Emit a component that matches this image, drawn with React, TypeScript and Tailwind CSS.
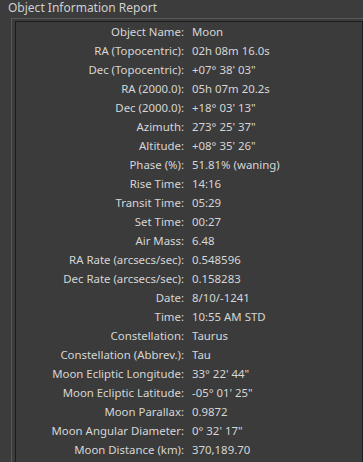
const rows: Array<[string, string]> = [
  ["Object Name:", "Moon"],
  ["RA (Topocentric):", "02h 08m 16.0s"],
  ["Dec (Topocentric):", "+07° 38' 03\""],
  ["RA (2000.0):", "05h 07m 20.2s"],
  ["Dec (2000.0):", "+18° 03' 13\""],
  ["Azimuth:", "273° 25' 37\""],
  ["Altitude:", "+08° 35' 26\""],
  ["Phase (%):", "51.81% (waning)"],
  ["Rise Time:", "14:16"],
  ["Transit Time:", "05:29"],
  ["Set Time:", "00:27"],
  ["Air Mass:", "6.48"],
  ["RA Rate (arcsecs/sec):", "0.548596"],
  ["Dec Rate (arcsecs/sec):", "0.158283"],
  ["Date:", "8/10/-1241"],
  ["Time:", "10:55 AM STD"],
  ["Constellation:", "Taurus"],
  ["Constellation (Abbrev.):", "Tau"],
  ["Moon Ecliptic Longitude:", "33° 22' 44\""],
  ["Moon Ecliptic Latitude:", "-05° 01' 25\""],
  ["Moon Parallax:", "0.9872"],
  ["Moon Angular Diameter:", "0° 32' 17\""],
  ["Moon Distance (km):", "370,189.70"],
];

const App = () => {
  return (
    <div className="w-[363px] h-[462px] overflow-hidden bg-[#3c3c3c] text-[11.4px] text-[#d6d6d6] font-['Noto_Sans',sans-serif]">
      {/** TITLE */}
      <div className="h-[18px] pl-[8px] leading-[15px] text-[12px] text-[#cfcfcf]">Object Information Report</div>

      {/** GROUP FRAME */}
      <div className="ml-[11px] h-[444px] border-l border-t border-[#585858] pt-[2px] pl-[3px]">
        <div className="h-full border-l border-t border-r border-[#1c1c1c] bg-[#3b3b3b]">
          {rows.map(([label, value]) => (
            <div key={label} className="flex h-[19px] items-center leading-[18px]">
              <div className="w-[168px] shrink-0 text-right">{label}</div>
              <div className="pl-[8px]">{value}</div>
            </div>
          ))}
        </div>
      </div>
    </div>
  );
};

export default App;
